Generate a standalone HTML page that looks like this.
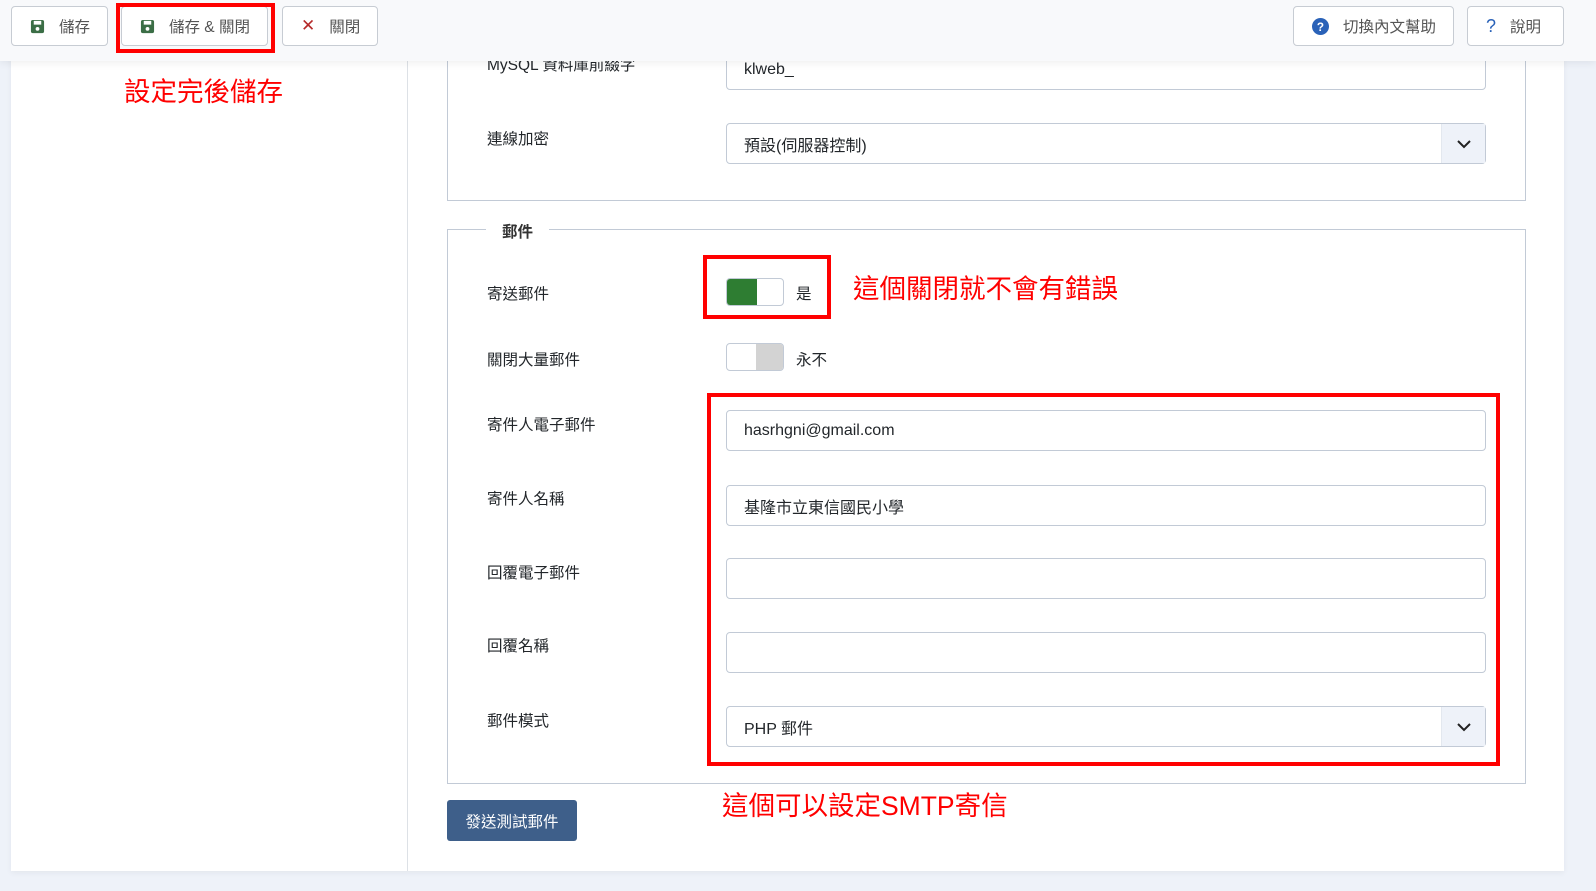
<!DOCTYPE html>
<html><head><meta charset="utf-8"><style>
*{box-sizing:border-box;margin:0;padding:0}
body{width:1596px;height:891px;overflow:hidden;background:#eef2f9;font-family:"Liberation Sans","Noto Sans CJK TC",sans-serif;color:#22262a;position:relative}
.a{position:absolute}
.card{left:11px;top:0;width:1553px;height:871px;background:#fff;box-shadow:0 2px 6px rgba(0,0,0,.05)}
.bar{left:0;top:0;width:1596px;height:61px;background:#f8f9fb;box-shadow:0 2px 8px rgba(0,0,0,.07);z-index:5}
.btn{position:absolute;top:6px;height:40px;border:1px solid #c7ccd3;border-radius:4px;background:#fff;font-size:15.5px;color:#555;display:flex;align-items:center;padding-left:18px;gap:14px}
.red{border:4px solid #f00;position:absolute}
.ann{position:absolute;color:#f00;font-size:26.5px;line-height:1;white-space:nowrap}
.lbl{position:absolute;left:487px;font-size:15.5px;line-height:1}
.inp{position:absolute;left:726px;width:760px;height:41px;border:1px solid #c2cad6;border-radius:4px;background:#fff;font-size:16px;padding-left:17px;display:flex;align-items:center}
.sel .arr{position:absolute;right:0;top:0;width:44px;height:39px;background:#eef2f9;border-left:1px solid #e3e8ef;display:flex;align-items:center;justify-content:center}
.fs{position:absolute;border:1px solid #c2cad6}
.tg{position:absolute;left:726px;width:58px;height:28px;border:1px solid #c2cad6;border-radius:4px;overflow:hidden;background:#fff}
</style></head><body>
<div class="a card"></div>
<div class="a" style="left:407px;top:0;width:1px;height:871px;background:#dde1e6"></div>
<div class="a bar">
 <div class="btn" style="left:11px;width:97px"><svg width="15" height="15" viewBox="0 0 16 16"><rect x="1" y="1" width="14" height="14" rx="2" fill="#3b6e46"/><rect x="4" y="2" width="8" height="4" fill="#fff"/><circle cx="8" cy="10.5" r="2" fill="#fff"/></svg>儲存</div>
 <div class="btn" style="left:121px;width:147px"><svg width="15" height="15" viewBox="0 0 16 16"><rect x="1" y="1" width="14" height="14" rx="2" fill="#3b6e46"/><rect x="4" y="2" width="8" height="4" fill="#fff"/><circle cx="8" cy="10.5" r="2" fill="#fff"/></svg>儲存 &amp; 關閉</div>
 <div class="btn" style="left:282px;width:96px"><span style="color:#b52a2a;font-size:17px">✕</span>關閉</div>
 <div class="btn" style="left:1293px;width:161px"><svg width="17" height="17" viewBox="0 0 16 16"><circle cx="8" cy="8" r="8" fill="#2a62b8"/><text x="8" y="12" font-size="11" font-weight="bold" fill="#fff" text-anchor="middle" font-family="Liberation Sans">?</text></svg>切換內文幫助</div>
 <div class="btn" style="left:1467px;width:97px"><span style="color:#2a62b8;font-size:18px">?</span>說明</div>
 <div class="red" style="left:116px;top:3px;width:159px;height:50px"></div>
</div>
<div class="ann" style="left:124px;top:79px">設定完後儲存</div>

<div class="fs" style="left:447px;top:-20px;width:1079px;height:221px"></div>
<div class="lbl" style="top:58px">MySQL 資料庫前綴字</div>
<div class="inp" style="top:49px">klweb_</div>
<div class="lbl" style="top:132px">連線加密</div>
<div class="inp sel" style="top:123px">預設(伺服器控制)<div class="arr"><svg width="16" height="10" viewBox="0 0 16 10"><path d="M2 2l6 6 6-6" stroke="#222" stroke-width="2" fill="none"/></svg></div></div>

<div class="fs" style="left:447px;top:229px;width:1079px;height:555px"></div>
<div class="a" style="left:486px;top:220px;background:#fff;padding:0 16px;font-size:15.5px;font-weight:bold;color:#333">郵件</div>
<div class="lbl" style="top:287px">寄送郵件</div>
<div class="tg" style="top:278px"><div style="width:30px;height:100%;background:#2e7d32"></div></div>
<div class="a" style="left:796px;top:282px;font-size:15.5px">是</div>
<div class="red" style="left:703px;top:255px;width:128px;height:64px"></div>
<div class="ann" style="left:853px;top:276px">這個關閉就不會有錯誤</div>
<div class="lbl" style="top:353px">關閉大量郵件</div>
<div class="tg" style="top:343px"><div style="margin-left:29px;width:29px;height:100%;background:#d3d3d3"></div></div>
<div class="a" style="left:796px;top:348px;font-size:15.5px">永不</div>

<div class="lbl" style="top:418px">寄件人電子郵件</div>
<div class="inp" style="top:410px">hasrhgni@gmail.com</div>
<div class="lbl" style="top:492px">寄件人名稱</div>
<div class="inp" style="top:485px">基隆市立東信國民小學</div>
<div class="lbl" style="top:566px">回覆電子郵件</div>
<div class="inp" style="top:558px"></div>
<div class="lbl" style="top:639px">回覆名稱</div>
<div class="inp" style="top:632px"></div>
<div class="lbl" style="top:714px">郵件模式</div>
<div class="inp sel" style="top:706px">PHP 郵件<div class="arr"><svg width="16" height="10" viewBox="0 0 16 10"><path d="M2 2l6 6 6-6" stroke="#222" stroke-width="2" fill="none"/></svg></div></div>
<div class="red" style="left:707px;top:393px;width:793px;height:373px"></div>

<div class="a" style="left:447px;top:800px;width:130px;height:41px;background:#3e5f8a;border-radius:3px;color:#fff;font-size:15.5px;display:flex;align-items:center;justify-content:center">發送測試郵件</div>
<div class="ann" style="left:722px;top:793px">這個可以設定SMTP寄信</div>
</body></html>
